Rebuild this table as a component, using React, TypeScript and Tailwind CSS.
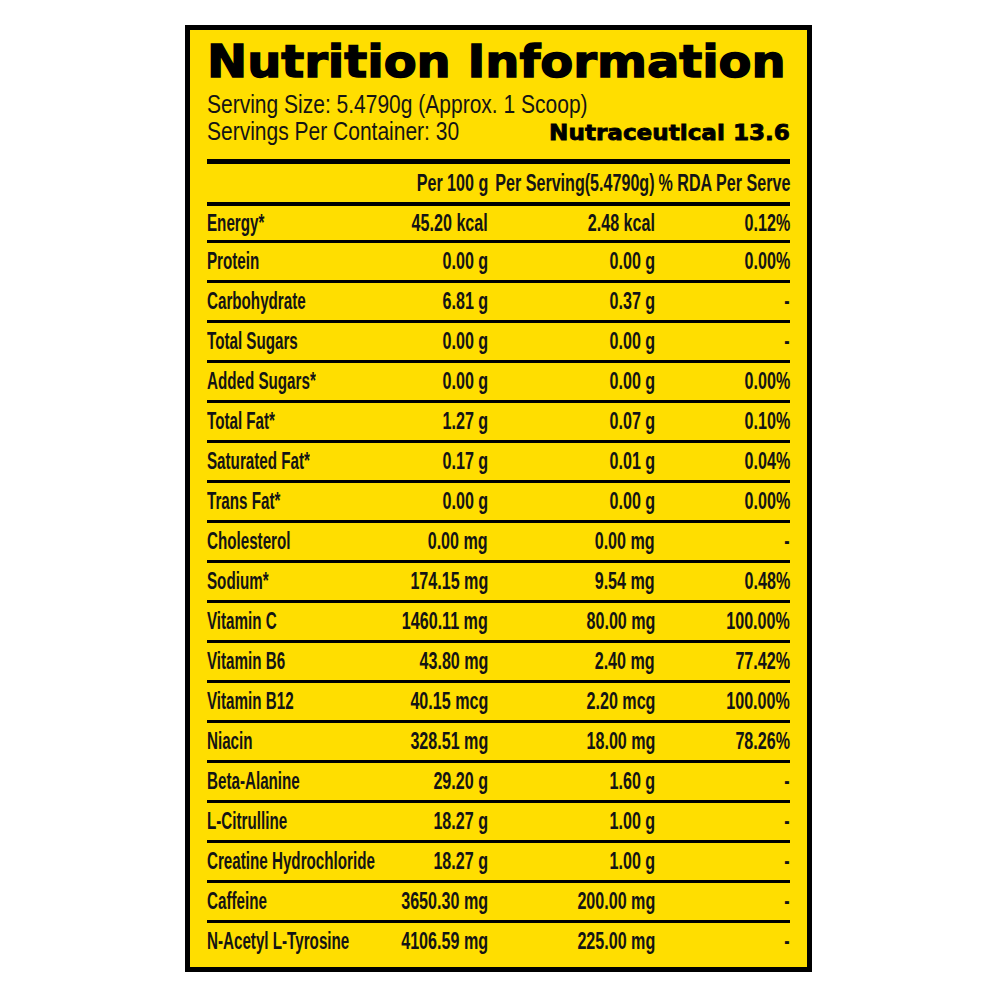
const rows: [string, string, string, string][] = [
    ["Energy*", "45.20 kcal", "2.48 kcal", "0.12%"],
    ["Protein", "0.00 g", "0.00 g", "0.00%"],
    ["Carbohydrate", "6.81 g", "0.37 g", "-"],
    ["Total Sugars", "0.00 g", "0.00 g", "-"],
    ["Added Sugars*", "0.00 g", "0.00 g", "0.00%"],
    ["Total Fat*", "1.27 g", "0.07 g", "0.10%"],
    ["Saturated Fat*", "0.17 g", "0.01 g", "0.04%"],
    ["Trans Fat*", "0.00 g", "0.00 g", "0.00%"],
    ["Cholesterol", "0.00 mg", "0.00 mg", "-"],
    ["Sodium*", "174.15 mg", "9.54 mg", "0.48%"],
    ["Vitamin C", "1460.11 mg", "80.00 mg", "100.00%"],
    ["Vitamin B6", "43.80 mg", "2.40 mg", "77.42%"],
    ["Vitamin B12", "40.15 mcg", "2.20 mcg", "100.00%"],
    ["Niacin", "328.51 mg", "18.00 mg", "78.26%"],
    ["Beta-Alanine", "29.20 g", "1.60 g", "-"],
    ["L-Citrulline", "18.27 g", "1.00 g", "-"],
    ["Creatine Hydrochloride", "18.27 g", "1.00 g", "-"],
    ["Caffeine", "3650.30 mg", "200.00 mg", "-"],
    ["N-Acetyl L-Tyrosine", "4106.59 mg", "225.00 mg", "-"],
];

const classes = {
    heavy: "font-['DejaVu_Sans',sans-serif] font-bold text-black",
    sans: "font-['Liberation_Sans',Arial,sans-serif]",
    grid: "grid grid-cols-[160px_121px_167px_135px] items-center",
};

// no condensed face is installed, so the text is squeezed from the side it is aligned to
const Cell = ({children, right}: { children?: React.ReactNode; right?: boolean }) => (
    <div className={`flex min-w-0 ${right ? "justify-end" : "justify-start"}`}>
        <span className={`shrink-0 whitespace-nowrap ${right ? "origin-right scale-x-[0.7]" : "origin-left scale-x-[0.66]"}`}>
            {children}
        </span>
    </div>
);

export default function App() {
    return (
        <div className="min-h-screen bg-white pt-[25px]">
            <div className="ml-[185px] w-[627px] h-[947px] border-[5px] border-black bg-[#FFDE00] px-[17px] text-[#141414]">
                <h1 className={`${classes.heavy} pt-[10px] text-[44px] leading-[44px] [-webkit-text-stroke:1.4px_#000]`}>
                    <span className="inline-block whitespace-nowrap origin-left scale-x-[1.09]">Nutrition Information</span>
                </h1>
                <div className={`${classes.sans} mt-[7px] text-[25px] leading-[27px]`}>
                    <p className="origin-left scale-x-[0.84] whitespace-nowrap">Serving Size: 5.4790g (Approx. 1 Scoop)</p>
                    <div className="flex items-baseline justify-between">
                        <span className="inline-block origin-left scale-x-[0.84] whitespace-nowrap">Servings Per Container: 30</span>
                        <span className={`${classes.heavy} text-[21px] [-webkit-text-stroke:0.8px_#000]`}>
                            <span className="inline-block whitespace-nowrap origin-right scale-x-[1.1]">Nutraceutical 13.6</span>
                        </span>
                    </div>
                </div>
                <div className="mt-[12px] h-[5px] bg-black"/>
                <div className={`${classes.grid} ${classes.sans} h-[38px] text-[23px] font-bold`}>
                    <Cell/>
                    <Cell right>Per 100 g</Cell>
                    <Cell right>Per Serving(5.4790g)</Cell>
                    <Cell right>% RDA Per Serve</Cell>
                </div>
                <div className="h-[4px] bg-black"/>
                <div className={`${classes.sans} text-[23px] font-bold`}>
                    {rows.map(([name, per100, perServe, rda], i) => (
                        <div key={name}
                             className={`${classes.grid} ${i === 0 ? "h-[34px]" : "h-[40px] border-t-[3px] border-black"}`}>
                            <Cell>{name}</Cell>
                            <Cell right>{per100}</Cell>
                            <Cell right>{perServe}</Cell>
                            <Cell right>{rda}</Cell>
                        </div>
                    ))}
                </div>
            </div>
        </div>
    );
}
